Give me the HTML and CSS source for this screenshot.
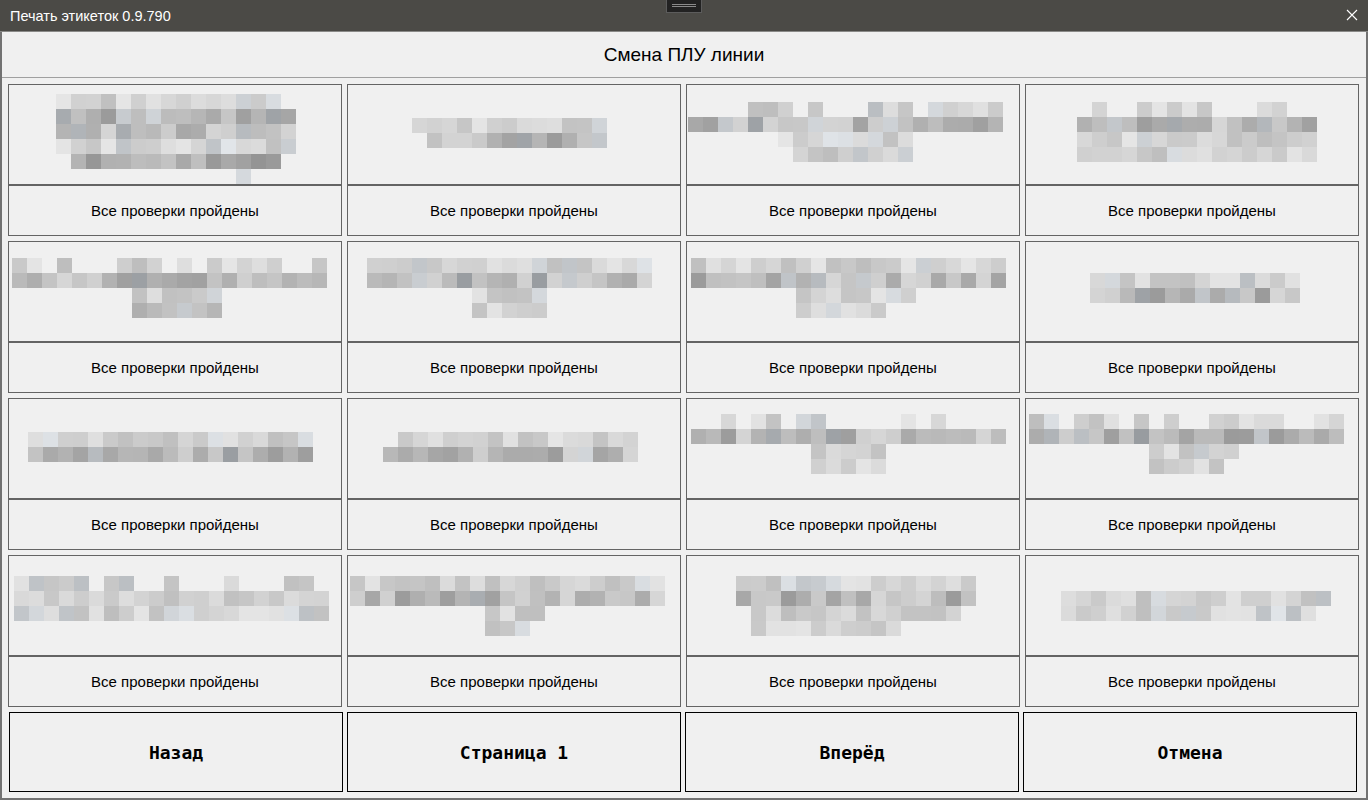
FILE: index.html
```html
<!DOCTYPE html>
<html lang="ru">
<head>
<meta charset="utf-8">
<title>Печать этикеток 0.9.790</title>
<link rel="stylesheet" href="styles.css">
</head>
<body>
<div class="window">
  <div class="titlebar">
    <span class="title">Печать этикеток 0.9.790</span>
    <div class="grip"><span></span><span></span></div>
    <svg class="close" width="12" height="12" viewBox="0 0 12 12"><path d="M1 1 L11 11 M11 1 L1 11" stroke="#ffffff" stroke-width="1.1" fill="none"/></svg>
  </div>
  <div class="body">
    <div class="header">Смена ПЛУ линии</div>
    <div class="grid">
      <div class="card"><div class="pic"></div><div class="status">Все проверки пройдены</div></div>
      <div class="card"><div class="pic"></div><div class="status">Все проверки пройдены</div></div>
      <div class="card"><div class="pic"></div><div class="status">Все проверки пройдены</div></div>
      <div class="card"><div class="pic"></div><div class="status">Все проверки пройдены</div></div>
      <div class="card"><div class="pic"></div><div class="status">Все проверки пройдены</div></div>
      <div class="card"><div class="pic"></div><div class="status">Все проверки пройдены</div></div>
      <div class="card"><div class="pic"></div><div class="status">Все проверки пройдены</div></div>
      <div class="card"><div class="pic"></div><div class="status">Все проверки пройдены</div></div>
      <div class="card"><div class="pic"></div><div class="status">Все проверки пройдены</div></div>
      <div class="card"><div class="pic"></div><div class="status">Все проверки пройдены</div></div>
      <div class="card"><div class="pic"></div><div class="status">Все проверки пройдены</div></div>
      <div class="card"><div class="pic"></div><div class="status">Все проверки пройдены</div></div>
      <div class="card"><div class="pic"></div><div class="status">Все проверки пройдены</div></div>
      <div class="card"><div class="pic"></div><div class="status">Все проверки пройдены</div></div>
      <div class="card"><div class="pic"></div><div class="status">Все проверки пройдены</div></div>
      <div class="card"><div class="pic"></div><div class="status">Все проверки пройдены</div></div>
    </div>
    <div class="buttons">
      <button class="btn">Назад</button>
      <button class="btn">Страница 1</button>
      <button class="btn">Вперёд</button>
      <button class="btn">Отмена</button>
    </div>
  </div>
</div>
<script src="script.js"></script>
</body>
</html>
```

FILE: styles.css
```css
* { box-sizing: border-box; }
html, body { margin: 0; padding: 0; }
body {
  width: 1368px;
  height: 800px;
  overflow: hidden;
  background: #f0f0f0;
  font-family: "Liberation Sans", Arial, sans-serif;
}
.window {
  width: 1368px;
  height: 800px;
  display: flex;
  flex-direction: column;
}
.titlebar {
  position: relative;
  height: 32px;
  flex: none;
  background: #4b4a46;
  display: flex;
  align-items: center;
  padding-left: 10px;
  border-bottom: 1px solid #8a8a88;
}
.title {
  color: #ffffff;
  font-size: 14.5px;
  font-family: "Liberation Sans", Arial, sans-serif;
}
.grip {
  position: absolute;
  left: 666px;
  top: 0;
  width: 36px;
  height: 13px;
  background: #222222;
  border: 1px solid #5c5c5c;
  border-top: none;
  display: flex;
  flex-direction: column;
  align-items: center;
  padding-top: 4px;
  gap: 1px;
}
.grip span {
  display: block;
  width: 24px;
  height: 1px;
  background: #8a8a8a;
}
.close {
  position: absolute;
  left: 1346px;
  top: 9px;
}
.body {
  flex: 1;
  display: flex;
  flex-direction: column;
  border-left: 2px solid #727272;
  border-right: 2px solid #727272;
  border-bottom: 2px solid #727272;
  background: #f0f0f0;
}
.header {
  height: 46px;
  flex: none;
  border-bottom: 1px solid #a0a0a0;
  display: flex;
  align-items: center;
  justify-content: center;
  font-size: 19px;
  color: #000000;
}
.grid {
  margin: 6px 0 0 6px;
  display: grid;
  grid-template-columns: repeat(4, 334px);
  grid-auto-rows: 152px;
  column-gap: 5px;
  row-gap: 5px;
}
.card {
  display: flex;
  flex-direction: column;
}
.pic {
  position: relative;
  height: 101px;
  border: 1px solid #646464;
  overflow: hidden;
}
.pic svg {
  position: absolute;
  left: -1px;
  top: -1px;
}
.status {
  height: 51px;
  border: 1px solid #646464;
  display: flex;
  align-items: center;
  justify-content: center;
  font-size: 15px;
  color: #000000;
}
.buttons {
  margin: 5px 0 0 7px;
  display: flex;
  gap: 4px;
}
.btn {
  width: 334px;
  height: 80px;
  border: 1px solid #000000;
  background: #f0f0f0;
  font-family: "DejaVu Sans Mono", "Liberation Mono", monospace;
  font-weight: bold;
  font-size: 18px;
  color: #000000;
  padding: 0;
  margin: 0;
}
```

FILE: script.js
```js
(function () {
  var seed = 12345;
  function rnd() {
    seed |= 0; seed = seed + 0x6D2B79F5 | 0;
    var t = Math.imul(seed ^ seed >>> 15, 1 | seed);
    t = t + Math.imul(t ^ t >>> 7, 61 | t) ^ t;
    return ((t ^ t >>> 14) >>> 0) / 4294967296;
  }
  // rows: [y, x, count, tone]  tone: 'n' normal, 'l' light, 's' sparse, 'd' dark
  var M = [
    [[10,48,15,'l'],[25,48,16,'n'],[40,48,16,'n'],[55,48,16,'l'],[70,63,14,'d'],[85,228,1,'l']],
    [[34,65,13,'l'],[49,80,12,'n']],
    [[18,2,21,'s'],[33,2,21,'n'],[48,92,9,'l'],[63,107,8,'l']],
    [[18,37,17,'s'],[33,52,16,'n'],[48,52,16,'l'],[63,52,16,'l']],
    [[17,4,21,'s'],[32,4,21,'n'],[47,124,6,'l'],[62,124,6,'n']],
    [[17,20,19,'l'],[32,20,19,'n'],[47,125,5,'l'],[62,125,5,'l']],
    [[17,5,21,'l'],[32,5,21,'n'],[47,110,8,'l'],[62,110,6,'l']],
    [[32,65,14,'l'],[47,65,14,'n']],
    [[34,20,19,'l'],[49,20,19,'n']],
    [[34,51,16,'l'],[49,36,17,'n']],
    [[16,5,21,'s'],[31,5,21,'n'],[46,125,5,'l'],[61,125,5,'l']],
    [[16,4,21,'s'],[31,4,21,'n'],[46,124,6,'l'],[61,124,5,'l']],
    [[21,6,21,'s'],[36,6,21,'l'],[51,6,21,'l']],
    [[21,3,21,'l'],[36,3,21,'n'],[51,138,4,'l'],[66,138,3,'l']],
    [[21,50,16,'l'],[36,50,16,'n'],[51,65,14,'l'],[66,65,10,'l']],
    [[36,36,18,'l'],[51,36,17,'l']]
  ];
  var NS = 'http://www.w3.org/2000/svg';
  var pics = document.querySelectorAll('.pic');
  for (var i = 0; i < pics.length; i++) {
    var svg = document.createElementNS(NS, 'svg');
    svg.setAttribute('width', '334');
    svg.setAttribute('height', '101');
    var rows = M[i] || [];
    for (var r = 0; r < rows.length; r++) {
      var row = rows[r];
      for (var c = 0; c < row[2]; c++) {
        var tone = row[3];
        if (tone === 's' && rnd() < 0.45) continue;
        var g;
        if (tone === 'n') g = 155 + Math.floor(rnd() * 60);
        else if (tone === 'd') g = 148 + Math.floor(rnd() * 50);
        else g = 190 + Math.floor(rnd() * 40);
        var tint = rnd() < 0.12 ? 4 : 0;
        var rect = document.createElementNS(NS, 'rect');
        rect.setAttribute('x', row[1] + c * 15);
        rect.setAttribute('y', row[0]);
        rect.setAttribute('width', '15');
        rect.setAttribute('height', '15');
        rect.setAttribute('fill', 'rgb(' + (g - tint) + ',' + g + ',' + (g + tint) + ')');
        svg.appendChild(rect);
      }
    }
    pics[i].appendChild(svg);
  }
})();
```
